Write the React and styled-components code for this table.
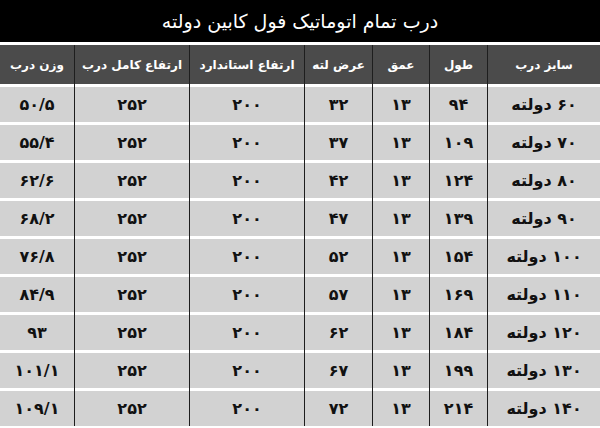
import React from 'react';
import styled, { createGlobalStyle } from 'styled-components';

const GlobalStyle = createGlobalStyle`
  html, body {
    margin: 0;
    padding: 0;
    background: #fff;
  }
  body {
    font-family: "DejaVu Sans", "Noto Sans", sans-serif;
  }
`;

const COLS = '113px 58px 57px 68px 115px 115px 74px';

const Page = styled.div`
  width: 600px;
  height: 428px;
  direction: rtl;
  overflow: hidden;
  background: #fff;
`;

const Title = styled.div`
  height: 42px;
  background: #000;
  color: #fff;
  font-size: 19px;
  display: flex;
  align-items: center;
  justify-content: center;
  margin-bottom: 3px;
`;

const Row = styled.div`
  display: grid;
  grid-template-columns: ${COLS};
  height: ${p => (p.$head ? '39px' : '38px')};
`;

const Cell = styled.div`
  display: flex;
  align-items: center;
  justify-content: center;
  font-weight: bold;
  font-size: ${p => (p.$head ? '12px' : '16px')};
  color: ${p => (p.$head ? '#fff' : '#111')};
  background: ${p => (p.$head
    ? '#4b4b4b'
    : 'linear-gradient(#fff 0 3px, #d2d2d2 3px)')};
  padding-top: ${p => (p.$head ? '0' : '3px')};
  border-left: 1px solid #1e1e1e;
  box-sizing: border-box;
  &:last-child {
    border-left: none;
  }
`;

const headers = ['سایز درب', 'طول', 'عمق', 'عرض لته', 'ارتفاع استاندارد', 'ارتفاع کامل درب', 'وزن درب'];

const rows = [
  ['۶۰ دولته', '۹۴', '۱۳', '۳۲', '۲۰۰', '۲۵۲', '۵۰/۵'],
  ['۷۰ دولته', '۱۰۹', '۱۳', '۳۷', '۲۰۰', '۲۵۲', '۵۵/۴'],
  ['۸۰ دولته', '۱۲۴', '۱۳', '۴۲', '۲۰۰', '۲۵۲', '۶۲/۶'],
  ['۹۰ دولته', '۱۳۹', '۱۳', '۴۷', '۲۰۰', '۲۵۲', '۶۸/۲'],
  ['۱۰۰ دولته', '۱۵۴', '۱۳', '۵۲', '۲۰۰', '۲۵۲', '۷۶/۸'],
  ['۱۱۰ دولته', '۱۶۹', '۱۳', '۵۷', '۲۰۰', '۲۵۲', '۸۴/۹'],
  ['۱۲۰ دولته', '۱۸۴', '۱۳', '۶۲', '۲۰۰', '۲۵۲', '۹۳'],
  ['۱۳۰ دولته', '۱۹۹', '۱۳', '۶۷', '۲۰۰', '۲۵۲', '۱۰۱/۱'],
  ['۱۴۰ دولته', '۲۱۴', '۱۳', '۷۲', '۲۰۰', '۲۵۲', '۱۰۹/۱'],
];

export default function App() {
  return (
    <Page>
      <GlobalStyle />
      <Title>درب تمام اتوماتیک فول کابین دولته</Title>
      <Row $head>
        {headers.map((h, i) => <Cell $head key={i}>{h}</Cell>)}
      </Row>
      {rows.map((r, i) => (
        <Row key={i}>
          {r.map((v, j) => <Cell key={j}>{v}</Cell>)}
        </Row>
      ))}
    </Page>
  );
}
